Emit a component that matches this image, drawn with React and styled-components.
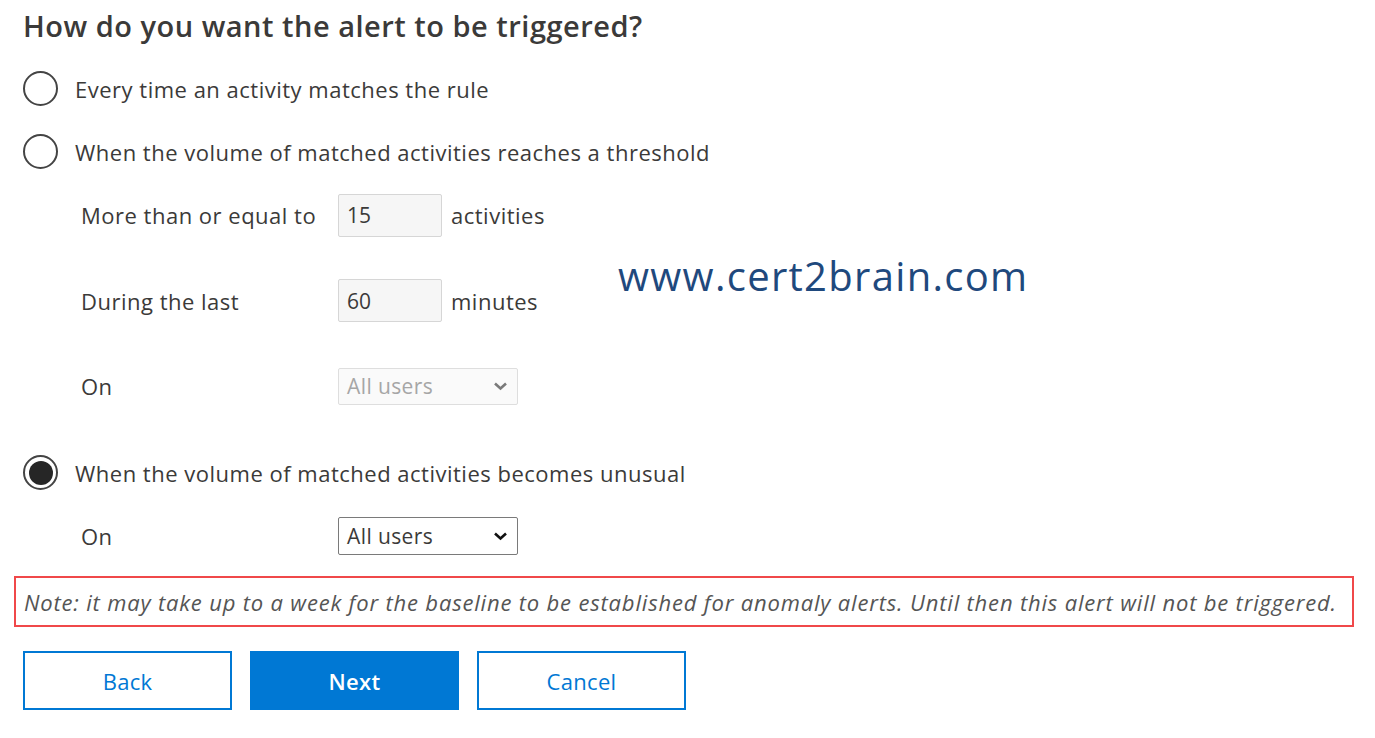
import React from "react"
import styled, { createGlobalStyle } from "styled-components"

const GlobalStyle = createGlobalStyle`
    html, body {
        margin: 0;
        background: #fff;
    }
    body {
        font-family: "Open Sans", "Noto Sans", sans-serif;
        color: #3b3a39;
    }
`

const Page = styled.div`
    position: relative;
    width: 1375px;
    height: 738px;
    padding: 4px 0 0 23px;
    box-sizing: border-box;
`

const Heading = styled.h2`
    margin: 0;
    height: 53px;
    line-height: 44px;
    font-size: 29px;
    font-weight: 600;
    color: #3b3a39;
    letter-spacing: 0.5px;
`

const RadioRow = styled.label`
    display: flex;
    align-items: center;
    gap: 17px;
    height: 63px;
    font-size: 22px;
    letter-spacing: 0.5px;
`

const Circle = styled.span`
    width: 35px;
    height: 35px;
    box-sizing: border-box;
    border-radius: 50%;
    border: 2px solid #444;
    display: flex;
    align-items: center;
    justify-content: center;
    &::after {
        content: "";
        width: 24px;
        height: 24px;
        border-radius: 50%;
        background: ${p => (p.checked ? "#262626" : "transparent")};
    }
`

const SubGrid = styled.div`
    display: grid;
    grid-template-columns: 257px max-content max-content;
    justify-content: start;
    align-items: center;
    padding-left: 58px;
    margin-top: ${p => p.offset || 0}px;
`

const SubLabel = styled.span`
    font-size: 22px;
    letter-spacing: 0.5px;
    height: ${p => p.h}px;
    display: flex;
    align-items: center;
`

const Unit = styled.span`
    font-size: 22px;
    letter-spacing: 0.5px;
    padding-left: 9px;
`

const NumBox = styled.div`
    width: 104px;
    height: 43px;
    box-sizing: border-box;
    border: 1px solid #d6d6d6;
    border-radius: 2px;
    background: #f6f6f6;
    font-size: 21px;
    padding-left: 8px;
    display: flex;
    align-items: center;
    color: #3b3a39;
`

const Select = styled.div`
    grid-column: span 2;
    width: 180px;
    height: ${p => p.h}px;
    box-sizing: border-box;
    border: 1px solid ${p => (p.disabled ? "#dedede" : "#7a7a7a")};
    border-radius: 2px;
    background: ${p => (p.disabled ? "#fafafa" : "#fff")};
    color: ${p => (p.disabled ? "#a6a6a6" : "#3b3a39")};
    font-size: 21px;
    letter-spacing: 0.4px;
    padding: 0 9px 0 8px;
    display: flex;
    align-items: center;
    justify-content: space-between;
    svg {
        color: ${p => (p.disabled ? "#7a7a7a" : "#111")};
    }
`

const Spacer = styled.div`
    height: ${p => p.h}px;
`

const Note = styled.div`
    margin: 8px 21px 0 -9px;
    height: 51px;
    box-sizing: border-box;
    border: 2px solid #f0484a;
    display: flex;
    align-items: center;
    padding-left: 8px;
    font-style: italic;
    font-size: 22px;
    color: #555;
    letter-spacing: 0.82px;
    white-space: nowrap;
`

const Buttons = styled.div`
    display: flex;
    gap: 18px;
    margin-top: 24px;
`

const Button = styled.button`
    width: 209px;
    height: 59px;
    box-sizing: border-box;
    border: 2px solid #0078d4;
    background: ${p => (p.primary ? "#0078d4" : "#fff")};
    color: ${p => (p.primary ? "#fff" : "#0078d4")};
    font-family: inherit;
    font-size: 22px;
    font-weight: ${p => (p.primary ? 600 : 400)};
    letter-spacing: 0.3px;
    padding: 0;
`

const Watermark = styled.div`
    position: absolute;
    left: 618px;
    top: 248px;
    font-family: "Open Sans", "Noto Sans", sans-serif;
    font-size: 40px;
    color: #1f497d;
    letter-spacing: 1.3px;
`

const Chevron = () => (
    <svg width="15" height="10" viewBox="0 0 15 10">
        <path d="M2 2.5 L7.5 7.5 L13 2.5" fill="none" stroke="currentColor" strokeWidth="2.6" />
    </svg>
)

const Radio = ({ checked, children }) => (
    <RadioRow>
        <Circle checked={checked} />
        {children}
    </RadioRow>
)

export default function App() {
    return (
        <>
            <GlobalStyle />
            <Page>
                <Heading>How do you want the alert to be triggered?</Heading>
                <Radio>Every time an activity matches the rule</Radio>
                <Radio>When the volume of matched activities reaches a threshold</Radio>
                <SubGrid offset={-11}>
                    <SubLabel h={86}>More than or equal to</SubLabel>
                    <NumBox>15</NumBox>
                    <Unit>activities</Unit>
                    <SubLabel h={85}>During the last</SubLabel>
                    <NumBox>60</NumBox>
                    <Unit>minutes</Unit>
                    <SubLabel h={86}>On</SubLabel>
                    <Select h={37} disabled>All users<Chevron /></Select>
                </SubGrid>
                <Spacer h={12} />
                <Radio checked>When the volume of matched activities becomes unusual</Radio>
                <SubGrid>
                    <SubLabel h={64}>On</SubLabel>
                    <Select h={38}>All users<Chevron /></Select>
                </SubGrid>
                <Note>Note: it may take up to a week for the baseline to be established for anomaly alerts. Until then this alert will not be triggered.</Note>
                <Buttons>
                    <Button>Back</Button>
                    <Button primary>Next</Button>
                    <Button>Cancel</Button>
                </Buttons>
                <Watermark>www.cert2brain.com</Watermark>
            </Page>
        </>
    )
}
